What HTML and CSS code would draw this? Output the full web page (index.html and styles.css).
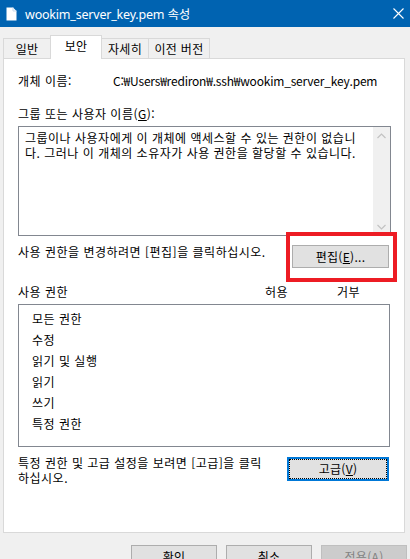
FILE: index.html
```html
<!DOCTYPE html>
<html lang="ko">
<head>
    <meta charset="UTF-8">
    <title>wookim_server_key.pem 속성</title>
    <link rel="stylesheet" href="styles.css">
</head>
<body>

    <!-- Title bar -->
    <div class="titlebar">
        <svg class="file-icon" width="11" height="14" viewBox="0 0 11 14">
            <path d="M0.5 0.5 H7 L10.5 4 V13.5 H0.5 Z" fill="#fff"/>
            <path d="M7 0.5 V4 H10.5" fill="none" stroke="#c9d9ea" stroke-width="1"/>
        </svg>
        <span class="title">wookim_server_key.pem 속성</span>
        <svg class="close-icon" width="11" height="11" viewBox="0 0 11 11">
            <path d="M0.5 0.5 L10.5 10.5 M10.5 0.5 L0.5 10.5" stroke="#fff" stroke-width="1.1"/>
        </svg>
    </div>

    <!-- Tabs -->
    <div class="tabs">
        <div class="tab tab-general">일반</div>
        <div class="tab tab-security active">보안</div>
        <div class="tab tab-details">자세히</div>
        <div class="tab tab-previous">이전 버전</div>
    </div>

    <!-- Security page -->
    <div class="panel">
        <div class="object-row">
            <span class="object-label">개체 이름:</span>
            <span class="object-path">C:₩Users₩rediron₩.ssh₩wookim_server_key.pem</span>
        </div>

        <div class="section-label">그룹 또는 사용자 이름(<u>G</u>):</div>
        <div class="listbox users-box">
            <p class="users-message">그룹이나 사용자에게 이 개체에 액세스할 수 있는 권한이 없습니<br>다. 그러나 이 개체의 소유자가 사용 권한을 할당할 수 있습니다.</p>
            <div class="scrollbar">
                <svg width="9" height="6" viewBox="0 0 9 6"><path d="M0.5 5 L4.5 1 L8.5 5" fill="none" stroke="#c2c2c2" stroke-width="1.2"/></svg>
                <svg width="9" height="6" viewBox="0 0 9 6"><path d="M0.5 1 L4.5 5 L8.5 1" fill="none" stroke="#c2c2c2" stroke-width="1.2"/></svg>
            </div>
        </div>

        <div class="action-row">
            <span class="action-text">사용 권한을 변경하려면 [편집]을 클릭하십시오.</span>
            <div class="btn-wrap">
                <button class="btn edit-btn">편집(<u>E</u>)...</button>
                <span class="highlight"></span>
            </div>
        </div>

        <div class="perm-header">
            <span>사용 권한</span>
            <span>허용</span>
            <span>거부</span>
        </div>
        <ul class="listbox perm-list">
            <li>모든 권한</li>
            <li>수정</li>
            <li>읽기 및 실행</li>
            <li>읽기</li>
            <li>쓰기</li>
            <li>특정 권한</li>
        </ul>

        <div class="action-row advanced-row">
            <span class="action-text">특정 권한 및 고급 설정을 보려면 [고급]을 클릭<br>하십시오.</span>
            <button class="btn advanced-btn">고급(<u>V</u>)</button>
        </div>
    </div>

    <!-- Dialog buttons -->
    <div class="footer">
        <button class="btn footer-btn">확인</button>
        <button class="btn footer-btn">취소</button>
        <button class="btn footer-btn" disabled>적용(<u>A</u>)</button>
    </div>

</body>
</html>
```

FILE: styles.css
```css
/* Windows file properties dialog - Security tab */
body {
    margin: 0;
    width: 410px;
    height: 559px;
    overflow: hidden;
    background-color: #f0f0f0;
    font-family: 'Noto Sans CJK KR', 'Noto Sans', sans-serif;
    font-size: 12px;
    letter-spacing: 0.5px;
    color: #000;
}

u {
    text-decoration-thickness: 1px;
    text-underline-offset: 1px;
}

.titlebar {
    height: 27px;
    background-color: #0063b1;
    display: flex;
    align-items: center;
    padding: 0 6px 0 6px;
    color: #fff;
}

.file-icon {
    margin-right: 8px;
}

.title {
    font-family: 'Noto Sans', 'Noto Sans CJK KR', sans-serif;
    font-size: 12.5px;
    letter-spacing: -0.2px;
    flex: 1;
    white-space: nowrap;
}

.tabs {
    display: flex;
    align-items: flex-end;
    height: 31px;
    padding-left: 3px;
}

.tab {
    box-sizing: border-box;
    height: 20px;
    line-height: 19px;
    text-align: center;
    border: 1px solid #d9d9d9;
    border-bottom: none;
    background-color: #f0f0f0;
    margin-left: -1px;
    letter-spacing: 0.3px;
}

.tab-general { width: 48px; margin-left: 0; }
.tab-security { width: 52px; }
.tab-details { width: 48px; }
.tab-previous { width: 62px; }

.tab.active {
    height: 24px;
    line-height: 20px;
    background-color: #fff;
    margin-bottom: -1px;
    position: relative;
    z-index: 1;
}

.panel {
    box-sizing: border-box;
    margin-left: 3px;
    width: 402px;
    height: 475px;
    border: 1px solid #d9d9d9;
    background-color: #fff;
    padding: 14px 14px 0 14px;
}

.object-row {
    display: flex;
    line-height: 16px;
}

.object-label {
    width: 95px;
    flex-shrink: 0;
}

.object-path {
    white-space: nowrap;
    letter-spacing: -0.2px;
}

.section-label {
    margin-top: 17px;
    line-height: 16px;
}

.listbox {
    box-sizing: border-box;
    border: 1px solid #828790;
    background-color: #fff;
}

.users-box {
    margin-top: 4px;
    width: 373px;
    height: 110px;
    display: flex;
}

.users-message {
    flex: 1;
    margin: 0;
    padding: 3px 0 0 6px;
    line-height: 15px;
    white-space: nowrap;
    overflow: hidden;
}

.scrollbar {
    width: 17px;
    flex-shrink: 0;
    background-color: #f0f0f0;
    display: flex;
    flex-direction: column;
    justify-content: space-between;
    align-items: center;
    padding: 6px 0 5px 0;
}

.action-row {
    display: flex;
    justify-content: space-between;
    align-items: flex-start;
    margin-top: 8px;
    padding-right: 1px;
}

.action-text {
    line-height: 16px;
}

.btn {
    box-sizing: border-box;
    font-family: 'Noto Sans CJK KR', 'Noto Sans', sans-serif;
    font-size: 12px;
    letter-spacing: 0.3px;
    color: #000;
    background-color: #e1e1e1;
    border: 1px solid #adadad;
    padding: 0;
    margin: 0;
    line-height: 20px;
}

.btn-wrap {
    position: relative;
    margin-top: 1px;
}

.edit-btn {
    width: 97px;
    height: 23px;
}

/* red annotation box drawn over the edit button */
.highlight {
    position: absolute;
    left: -6px;
    top: -13px;
    right: -8px;
    bottom: -14px;
    border: 4px solid #ed1c24;
}

.perm-header {
    display: grid;
    grid-template-columns: 247px 72px auto;
    margin-top: 16px;
    line-height: 16px;
}

.perm-list {
    list-style: none;
    margin: 4px 0 0 0;
    padding: 3px 0 0 13px;
    width: 372px;
    height: 143px;
}

.perm-list li {
    line-height: 21px;
}

.advanced-row {
    margin-top: 8px;
}

.advanced-row .action-text {
    line-height: 15px;
}

.advanced-btn {
    width: 102px;
    height: 24px;
    margin-top: 2px;
    border: 2px solid #0078d7;
    outline: 1px dotted #000;
    outline-offset: -3px;
}

.footer {
    display: flex;
    justify-content: flex-end;
    gap: 9px;
    padding-right: 3px;
    margin-top: 12px;
}

.footer-btn {
    width: 86px;
    height: 23px;
}

.footer-btn:disabled {
    background-color: #cccccc;
    border-color: #bfbfbf;
    color: #838383;
}
```
